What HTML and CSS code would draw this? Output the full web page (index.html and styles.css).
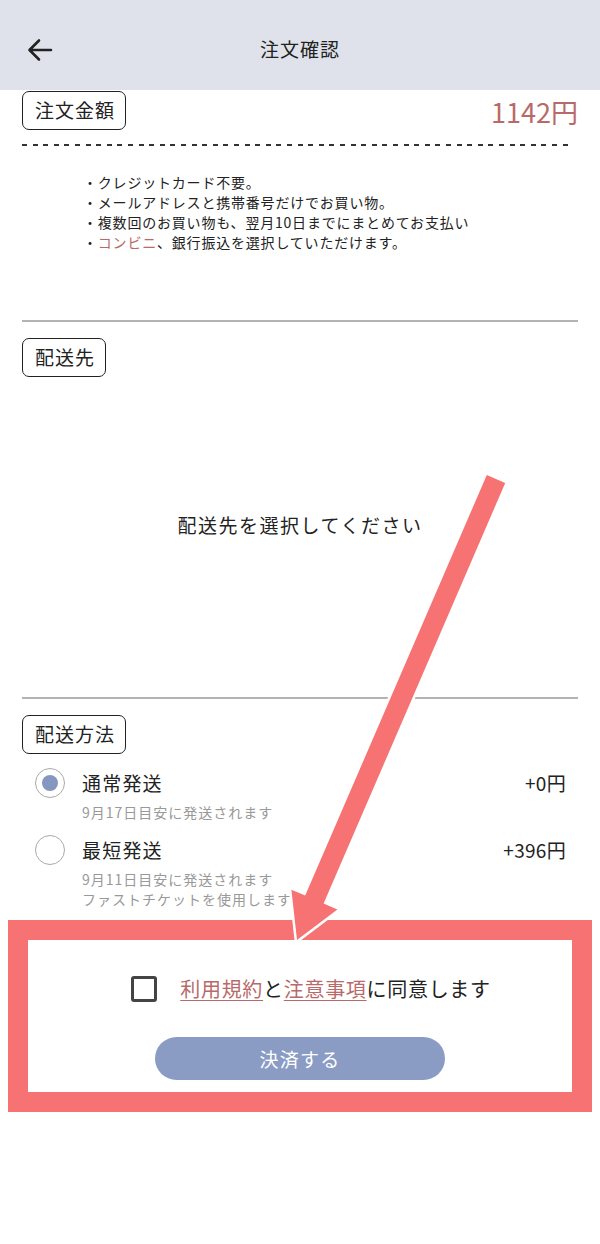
FILE: index.html
```html
<!DOCTYPE html>
<html lang="ja">
<head>
<meta charset="utf-8">
<title>注文確認</title>
<link rel="stylesheet" href="styles.css">
</head>
<body>
<div class="page">
  <header class="topbar">
    <svg class="back" width="26" height="26" viewBox="0 0 26 26"><path d="M24 13H3M12 3.5L2.5 13 12 22.5" fill="none" stroke="#222" stroke-width="2.6" stroke-linecap="round" stroke-linejoin="round"/></svg>
    <h1 class="title">注文確認</h1>
  </header>
  <main class="content">
    <div class="amount-row">
      <span class="badge">注文金額</span>
      <span class="amount">1142円</span>
    </div>
    <div class="dashed"></div>
    <ul class="notes">
      <li>・クレジットカード不要。</li>
      <li>・メールアドレスと携帯番号だけでお買い物。</li>
      <li>・複数回のお買い物も、翌月10日までにまとめてお支払い</li>
      <li>・<span class="accent">コンビニ</span>、銀行振込を選択していただけます。</li>
    </ul>
    <div class="rule rule-1"></div>
    <span class="badge badge-sm">配送先</span>
    <p class="placeholder">配送先を選択してください</p>
    <div class="rule rule-2"></div>
    <span class="badge">配送方法</span>
    <div class="option option-1">
      <span class="radio selected"></span>
      <div class="opt-body">
        <div class="opt-head"><span class="opt-name">通常発送</span><span class="opt-price">+0円</span></div>
        <div class="opt-sub">9月17日目安に発送されます</div>
      </div>
    </div>
    <div class="option option-2">
      <span class="radio"></span>
      <div class="opt-body">
        <div class="opt-head"><span class="opt-name">最短発送</span><span class="opt-price">+396円</span></div>
        <div class="opt-sub">9月11日目安に発送されます<br>ファストチケットを使用します</div>
      </div>
    </div>
  </main>
  <section class="confirm">
    <div class="agree">
      <span class="checkbox"></span>
      <span class="agree-text"><span class="link">利用規約</span>と<span class="link">注意事項</span>に同意します</span>
    </div>
    <button class="pay">決済する</button>
  </section>
  <svg class="annotation" width="600" height="1244" viewBox="0 0 600 1244">
    <polygon points="486.8,475 505.2,483 323.6,903.6 337.4,909.5 297,940 291.4,889.7 305.2,895.6" fill="#f77272" stroke="#fff" stroke-width="5" stroke-linejoin="miter" paint-order="stroke"/>
  </svg>
</div>
</body>
</html>
```

FILE: styles.css
```css
* { box-sizing: border-box; }
html, body { margin: 0; padding: 0; background: #fff; }
body {
  font-family: "Noto Sans CJK JP", "Noto Sans", sans-serif;
  color: #222;
}
.page { position: relative; width: 600px; min-height: 1244px; overflow: hidden; }

.topbar {
  height: 90px;
  background: #dfe2eb;
  display: flex;
  align-items: center;
  justify-content: center;
  padding-top: 8px;
  position: relative;
}
.back { position: absolute; left: 27px; top: 37px; }
.title { margin: 0; font-size: 19px; font-weight: 400; line-height: 26px; letter-spacing: 1px; }

.content { padding: 0 22px; }

.amount-row {
  display: flex;
  justify-content: space-between;
  align-items: center;
  margin-top: 1px;
}
.badge {
  display: inline-block;
  height: 39px;
  line-height: 35px;
  padding: 0 10px 0 12px;
  border: 1.6px solid #222;
  border-radius: 7px;
  font-size: 19px;
  letter-spacing: 1px;
}
.amount { font-size: 27px; color: #b86a6a; line-height: 36px; margin-top: 2px; }

.dashed {
  margin-top: 14px;
  width: 550px;
  height: 2px;
  background-image: repeating-linear-gradient(to right, #333 0 5px, transparent 5px 10.6px);
}
.notes {
  list-style: none;
  margin: 26px 0 0;
  padding: 0 0 0 61px;
  font-size: 14px;
  line-height: 20px;
  letter-spacing: 0.8px;
}
.accent { color: #b86a6a; }

.rule { height: 2px; background: #b3b3b3; }
.rule-1 { margin-top: 68px; margin-bottom: 16px; }
.placeholder {
  margin: 134px 0 0;
  text-align: center;
  font-size: 19px;
  line-height: 28px;
  letter-spacing: 1.5px;
}
.rule-2 { margin-top: 158px; margin-bottom: 16px; }

.option {
  display: flex;
  align-items: flex-start;
  gap: 17px;
  padding-left: 13px;
  padding-right: 12px;
}
.option-1 { margin-top: 14px; }
.option-2 { margin-top: 13px; }
.radio {
  flex: none;
  width: 30px;
  height: 30px;
  border-radius: 50%;
  border: 1.5px solid #aaa;
  display: flex;
  align-items: center;
  justify-content: center;
}
.radio.selected::after {
  content: "";
  width: 16px;
  height: 16px;
  border-radius: 50%;
  background: #8596c0;
}
.opt-body { flex: 1; }
.opt-head {
  display: flex;
  justify-content: space-between;
  font-size: 19px;
  line-height: 30px;
}
.opt-name { letter-spacing: 1.2px; }
.opt-price { letter-spacing: 0.3px; }
.opt-sub { font-size: 14px; line-height: 20px; color: #999; margin-top: 4px; letter-spacing: 1px; }

.confirm {
  margin: 11px 8px 0;
  border: 20px solid #f77272;
  height: 192px;
  padding-top: 35px;
  display: flex;
  flex-direction: column;
  align-items: center;
}
.agree { display: flex; align-items: center; gap: 23px; margin-left: 22px; height: 28px; }
.checkbox {
  width: 26px;
  height: 26px;
  border: 3px solid #444;
  border-radius: 3px;
}
.agree-text { font-size: 20px; line-height: 28px; letter-spacing: 0.7px; }
.link { color: #b86a6a; text-decoration: underline; text-decoration-thickness: 1px; text-underline-offset: 3px; }
.pay {
  margin-top: 34px;
  width: 290px;
  height: 43px;
  border: none;
  border-radius: 22px;
  background: #8a9cc4;
  color: #fff;
  font-family: inherit;
  font-size: 19px;
  letter-spacing: 1.2px;
}

.annotation { position: absolute; left: 0; top: 0; pointer-events: none; }
```
